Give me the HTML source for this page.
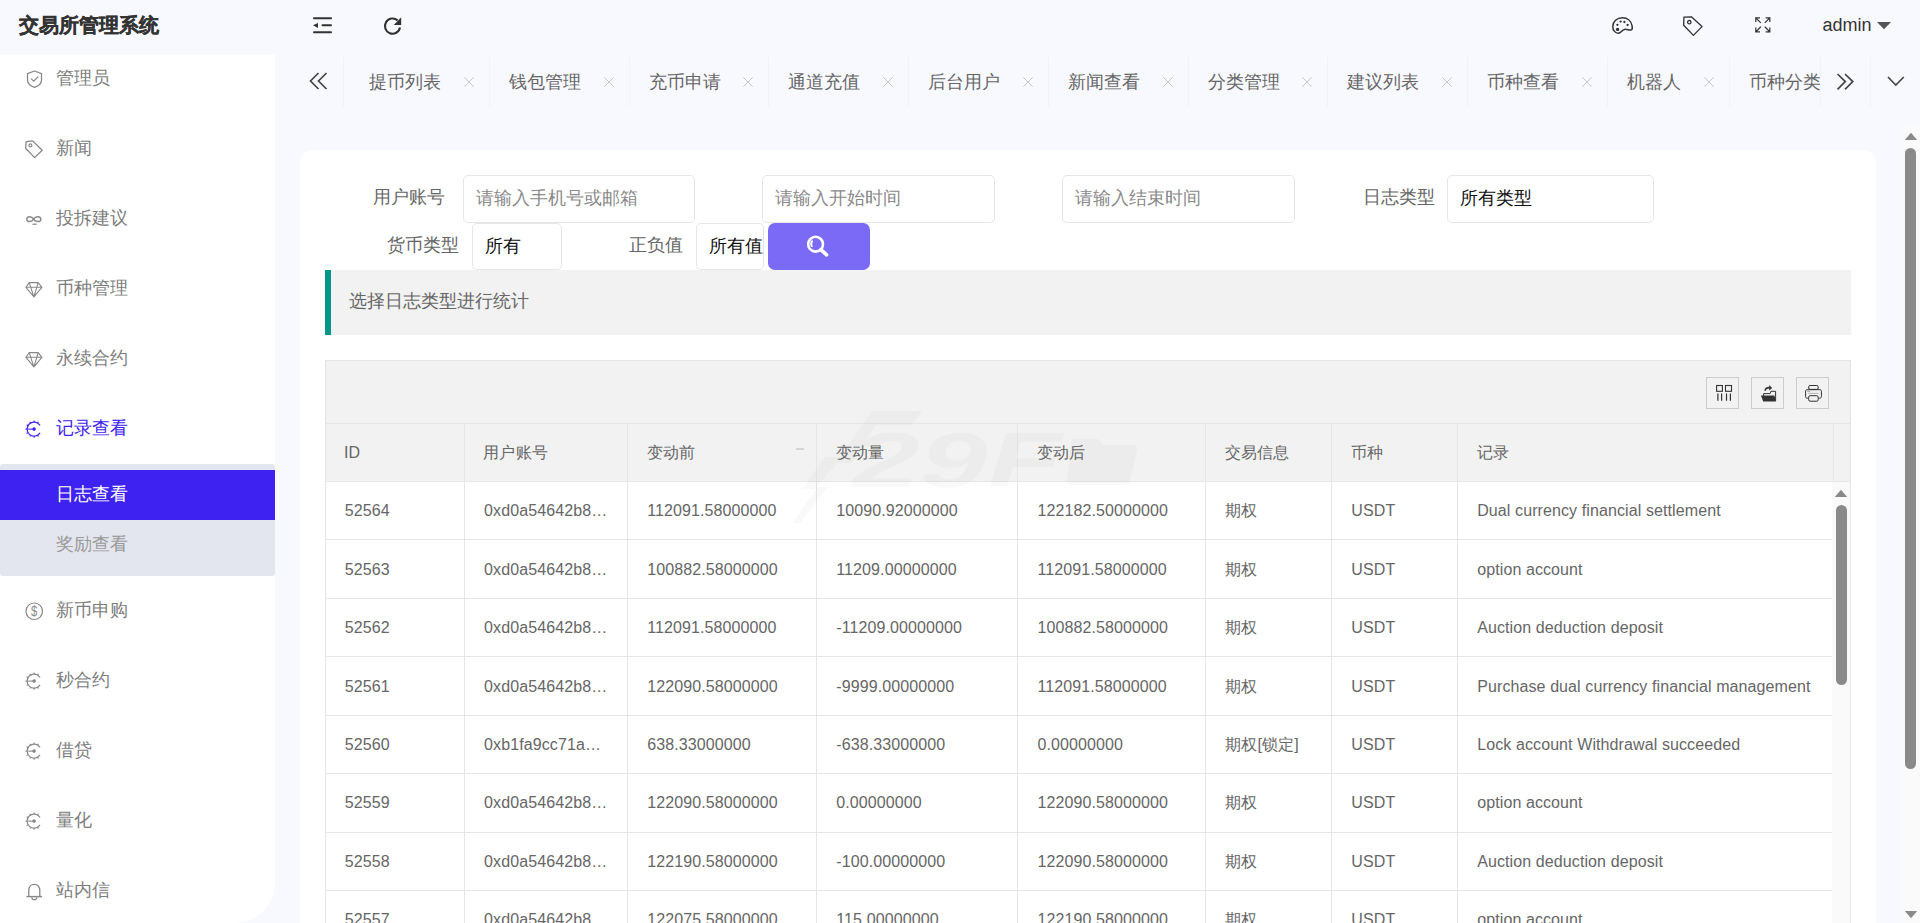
<!DOCTYPE html>
<html><head><meta charset="utf-8">
<style>
*{box-sizing:border-box;margin:0;padding:0}
html,body{width:1920px;height:923px;overflow:hidden;background:#f8f9fe;font-family:"Liberation Sans",sans-serif;color:#666}
.abs{position:absolute}
.logo{left:19px;top:9.5px;font-size:19.6px;font-weight:bold;color:#333;line-height:30px;letter-spacing:0.05px;-webkit-text-stroke:0.3px #333}
svg{position:absolute;overflow:visible}
/* sidebar */
.side{left:0;top:55px;width:275px;height:868px;background:#fff;border-bottom-right-radius:40px}
.mi{position:absolute;left:56px;font-size:18px;color:#7d7d7d;line-height:24px;white-space:nowrap}
.sub{position:absolute;left:0;top:464px;width:275px;height:112px;background:#e3e6ee;border-radius:3px}
.act{position:absolute;left:0;top:470px;width:275px;height:50px;background:#3d22f2}
/* tabs */
.tab{position:absolute;top:57px;height:50px;font-size:18px;color:#666;line-height:50px;white-space:nowrap}
.sep{position:absolute;top:57px;width:1px;height:50px;background:#f2f3f6}
.x{position:absolute;top:77px;width:10px;height:10px}

.card{position:absolute;left:300px;top:150px;width:1576px;height:800px;background:#fff;border-radius:14px}
.inp{position:absolute;top:175px;height:48px;border:1px solid #e6e6e6;border-radius:5px;background:#fff;font-size:18px;line-height:44px;padding-left:12px;padding-bottom:1px;white-space:nowrap;overflow:hidden}
.ph{color:#8a8a8a}
.val{color:#111}
.lbl{position:absolute;font-size:18px;color:#666;line-height:24px;white-space:nowrap}
.quote{position:absolute;left:325px;top:270px;width:1526px;height:65px;background:#f2f2f2;border-left:6px solid #009688}
.qt{position:absolute;left:349px;top:289px;font-size:18px;line-height:24px;color:#666}
.tbl{position:absolute;left:325px;top:360px;width:1526px;height:600px;border:1px solid #e6e6e6;background:#fff}
.tool{position:absolute;left:325px;top:360px;width:1526px;height:63px;background:#f2f2f2;border:1px solid #e6e6e6;border-bottom:none}
.tb{position:absolute;top:377px;width:33px;height:32px;border:1px solid #ccc}
.hdr{position:absolute;left:325px;top:423px;width:1526px;height:59px;background:#f2f2f2;border:1px solid #e6e6e6}
.vl{position:absolute;width:1px;background:#e6e6e6}
.hl{position:absolute;height:1px;background:#e6e6e6}
.c{position:absolute;font-size:16px;color:#666;line-height:20px;white-space:nowrap;letter-spacing:0.1px}
</style></head><body>
<div class="abs logo">交易所管理系统</div>
<!-- header icons -->
<svg style="left:313px;top:17px" width="20" height="17" viewBox="0 0 20 17">
 <rect x="0" y="0.2" width="19" height="2" rx="1" fill="#333"/>
 <rect x="8.5" y="7.2" width="10.5" height="2" rx="1" fill="#333"/>
 <rect x="0" y="14.3" width="19" height="2" rx="1" fill="#333"/>
 <path d="M0 8.2 L5 5.9 L5 10.9 Z" fill="#333"/>
</svg>
<svg style="left:383px;top:16px" width="20" height="20" viewBox="0 0 20 20">
 <path d="M17 11.5 A7.6 7.6 0 1 1 14.6 4.4" fill="none" stroke="#333" stroke-width="2.1"/>
 <path d="M10.8 9 L18.2 9 L18.2 1.3 Z" fill="#333"/>
</svg>
<!-- palette -->
<svg style="left:1612px;top:17px" width="21" height="17" viewBox="0 0 21 17">
 <path d="M10.5 0.8 C4.8 0.8 0.8 4.6 0.8 9.4 C0.8 13.6 3.4 16.2 6.4 16.2 C9 16.2 9.6 13 12.6 12.4 C15.2 11.9 16.6 13.6 19.4 12.8 C20.4 12.4 20.4 10.4 20.1 8.8 C19.2 4.2 15.6 0.8 10.5 0.8 Z" fill="none" stroke="#333" stroke-width="1.5"/>
 <circle cx="5.6" cy="12.4" r="1.7" fill="#333"/>
 <circle cx="5.4" cy="7.8" r="1.15" fill="#333"/>
 <circle cx="8.6" cy="4.6" r="1.15" fill="#333"/>
 <circle cx="12.4" cy="5.0" r="1.15" fill="#333"/>
 <circle cx="15.6" cy="8.0" r="1.15" fill="#333"/>
</svg>
<!-- tag -->
<svg style="left:1682.5px;top:15.5px" width="21" height="21" viewBox="0 0 21 21">
 <path d="M0.9 1.2 L8.4 0.8 L19 10.6 L10.4 19.4 L0.7 9.2 Z" fill="none" stroke="#333" stroke-width="1.35" stroke-linejoin="round"/>
 <circle cx="6.3" cy="6.2" r="1.7" fill="none" stroke="#333" stroke-width="1.3"/>
</svg>
<!-- fullscreen -->
<svg style="left:1754.5px;top:16.5px" width="16" height="16" viewBox="0 0 16 16"><g fill="none" stroke="#333" stroke-width="1.2" stroke-linecap="square"><path d="M0.8 4.4 V0.8 H4.4 M0.8 0.8 L5.4 5.4"/><path d="M11.2 0.8 H14.8 V4.4 M14.8 0.8 L10.2 5.4"/><path d="M0.8 11.2 V14.8 H4.4 M0.8 14.8 L5.4 10.2"/><path d="M14.8 11.2 V14.8 H11.2 M14.8 14.8 L10.2 10.2"/></g></svg>
<div class="abs" style="left:1822.5px;top:12.6px;font-size:18px;line-height:24px;color:#333">admin</div>
<svg style="left:1877px;top:22px" width="14" height="8" viewBox="0 0 14 8"><path d="M0 0 H14 L7 7.2 Z" fill="#555"/></svg>

<!-- sidebar -->
<div class="abs side"></div>
<div class="sub"></div>
<div class="act"></div>
<div class="mi" style="top:66px;color:#7d7d7d">管理员</div>
<svg style="left:26px;top:70px" width="18" height="19" viewBox="0 0 18 19"><path d="M8.5 1 L15.5 3.6 V10 C15.5 13.6 12.4 16 8.5 17.4 C4.6 16 1.5 13.6 1.5 10 V3.6 Z" fill="none" stroke="#888" stroke-width="1.3" stroke-linejoin="round"/><path d="M5 8.6 L7.7 11.2 L12.2 6.6" fill="none" stroke="#888" stroke-width="1.3"/></svg>
<div class="mi" style="top:136px;color:#7d7d7d">新闻</div>
<svg style="left:24.5px;top:139.5px" width="19" height="19" viewBox="0 0 19 19"><path d="M1.2 1.6 L7.6 0.9 L17.2 10.2 L9.6 17.6 L0.6 8.3 Z" fill="none" stroke="#888" stroke-width="1.3" stroke-linejoin="round"/><circle cx="5.4" cy="5.4" r="1.5" fill="none" stroke="#888" stroke-width="1.2"/></svg>
<div class="mi" style="top:206px;color:#7d7d7d">投拆建议</div>
<svg style="left:25px;top:210px" width="19" height="17" viewBox="0 0 19 17"><path d="M8.6 9.2 C7 6.4 1.8 5.6 1.8 9.2 C1.8 12.6 7 12 8.6 9.2 C10.3 6.4 15.8 5.6 15.8 9.2 C15.8 12.6 10.3 12 8.6 9.2 Z" fill="none" stroke="#888" stroke-width="1.5"/><rect x="7.4" y="13.6" width="4.4" height="1.2" fill="#888"/></svg>
<div class="mi" style="top:276px;color:#7d7d7d">币种管理</div>
<svg style="left:25px;top:281.5px" width="18" height="16" viewBox="0 0 18 16"><path d="M0.9 5.3 L4.2 0.6 H13.2 L16.9 5.3 L8.9 14.8 Z M0.9 5.3 H16.9 M4.2 0.6 L8.9 14.8 L13.2 0.6" fill="none" stroke="#888" stroke-width="1.1" stroke-linejoin="round"/></svg>
<div class="mi" style="top:346px;color:#7d7d7d">永续合约</div>
<svg style="left:25px;top:351.5px" width="18" height="16" viewBox="0 0 18 16"><path d="M0.9 5.3 L4.2 0.6 H13.2 L16.9 5.3 L8.9 14.8 Z M0.9 5.3 H16.9 M4.2 0.6 L8.9 14.8 L13.2 0.6" fill="none" stroke="#888" stroke-width="1.1" stroke-linejoin="round"/></svg>
<div class="mi" style="top:416px;color:#3d22f2">记录查看</div>
<svg style="left:24px;top:420.0px" width="19" height="19" viewBox="0 0 19 19"><path d="M16.04 5.39 A7.0 7.0 0 1 0 16.04 12.81" fill="none" stroke="#3d22f2" stroke-width="1.2"/><path d="M13.60 15.16 L14.40 16.55 M10.10 16.10 L10.10 17.70 M6.60 15.16 L5.80 16.55 M4.04 12.60 L2.65 13.40 M3.10 9.10 L1.50 9.10 M4.04 5.60 L2.65 4.80 M6.60 3.04 L5.80 1.65 M10.10 2.10 L10.10 0.50 M13.60 3.04 L14.40 1.65 " fill="none" stroke="#3d22f2" stroke-width="1.1"/><line x1="4.2" y1="9.1" x2="10.1" y2="9.1" stroke="#3d22f2" stroke-width="1.1"/><circle cx="10.1" cy="9.1" r="1.8" fill="#3d22f2"/></svg>
<div class="mi" style="top:598px;color:#7d7d7d">新币申购</div>
<svg style="left:25px;top:601.5px" width="19" height="19" viewBox="0 0 19 19"><rect x="1" y="1" width="16.5" height="16.5" rx="8.25" fill="none" stroke="#888" stroke-width="1.2"/><text x="11.6" y="14.4" text-anchor="middle" font-size="14.5" font-family="Liberation Sans" fill="#888" transform="scale(0.78,1)">$</text></svg>
<div class="mi" style="top:668px;color:#7d7d7d">秒合约</div>
<svg style="left:24px;top:672.0px" width="19" height="19" viewBox="0 0 19 19"><path d="M16.04 5.39 A7.0 7.0 0 1 0 16.04 12.81" fill="none" stroke="#888" stroke-width="1.2"/><path d="M13.60 15.16 L14.40 16.55 M10.10 16.10 L10.10 17.70 M6.60 15.16 L5.80 16.55 M4.04 12.60 L2.65 13.40 M3.10 9.10 L1.50 9.10 M4.04 5.60 L2.65 4.80 M6.60 3.04 L5.80 1.65 M10.10 2.10 L10.10 0.50 M13.60 3.04 L14.40 1.65 " fill="none" stroke="#888" stroke-width="1.1"/><line x1="4.2" y1="9.1" x2="10.1" y2="9.1" stroke="#888" stroke-width="1.1"/><circle cx="10.1" cy="9.1" r="1.8" fill="#888"/></svg>
<div class="mi" style="top:738px;color:#7d7d7d">借贷</div>
<svg style="left:24px;top:742.0px" width="19" height="19" viewBox="0 0 19 19"><path d="M16.04 5.39 A7.0 7.0 0 1 0 16.04 12.81" fill="none" stroke="#888" stroke-width="1.2"/><path d="M13.60 15.16 L14.40 16.55 M10.10 16.10 L10.10 17.70 M6.60 15.16 L5.80 16.55 M4.04 12.60 L2.65 13.40 M3.10 9.10 L1.50 9.10 M4.04 5.60 L2.65 4.80 M6.60 3.04 L5.80 1.65 M10.10 2.10 L10.10 0.50 M13.60 3.04 L14.40 1.65 " fill="none" stroke="#888" stroke-width="1.1"/><line x1="4.2" y1="9.1" x2="10.1" y2="9.1" stroke="#888" stroke-width="1.1"/><circle cx="10.1" cy="9.1" r="1.8" fill="#888"/></svg>
<div class="mi" style="top:808px;color:#7d7d7d">量化</div>
<svg style="left:24px;top:812.0px" width="19" height="19" viewBox="0 0 19 19"><path d="M16.04 5.39 A7.0 7.0 0 1 0 16.04 12.81" fill="none" stroke="#888" stroke-width="1.2"/><path d="M13.60 15.16 L14.40 16.55 M10.10 16.10 L10.10 17.70 M6.60 15.16 L5.80 16.55 M4.04 12.60 L2.65 13.40 M3.10 9.10 L1.50 9.10 M4.04 5.60 L2.65 4.80 M6.60 3.04 L5.80 1.65 M10.10 2.10 L10.10 0.50 M13.60 3.04 L14.40 1.65 " fill="none" stroke="#888" stroke-width="1.1"/><line x1="4.2" y1="9.1" x2="10.1" y2="9.1" stroke="#888" stroke-width="1.1"/><circle cx="10.1" cy="9.1" r="1.8" fill="#888"/></svg>
<div class="mi" style="top:878px;color:#7d7d7d">站内信</div>
<svg style="left:25.5px;top:883px" width="17" height="18" viewBox="0 0 17 18"><path d="M2.8 13.6 V7.4 C2.8 3.7 5.2 1.3 8.3 1.3 C11.4 1.3 13.8 3.7 13.8 7.4 V13.6" fill="none" stroke="#888" stroke-width="1.3"/><line x1="0.5" y1="13.6" x2="16.1" y2="13.6" stroke="#888" stroke-width="1.4"/><path d="M5.8 14.2 A2.5 2.5 0 0 0 10.8 14.2" fill="none" stroke="#888" stroke-width="1.2"/></svg>
<div class="mi" style="top:482px;color:#fff">日志查看</div>
<div class="mi" style="top:532px;color:#9a9a9a">奖励查看</div>
<div class="sep" style="left:342.8px"></div>
<div class="sep" style="left:489.0px"></div>
<div class="sep" style="left:629.0px"></div>
<div class="sep" style="left:767.8px"></div>
<div class="sep" style="left:908.0px"></div>
<div class="sep" style="left:1048.1px"></div>
<div class="sep" style="left:1188.0px"></div>
<div class="sep" style="left:1327.0px"></div>
<div class="sep" style="left:1466.9px"></div>
<div class="sep" style="left:1607.0px"></div>
<div class="sep" style="left:1729.0px"></div>
<div class="sep" style="left:1820.1px"></div>
<div class="sep" style="left:1870.2px"></div>
<div class="tab" style="left:368.8px">提币列表</div>
<svg class="x" style="left:464.0px;top:77px" width="10" height="10" viewBox="0 0 10 10"><path d="M0.3 0.3 L9.7 9.7 M9.7 0.3 L0.3 9.7" stroke="#c4c4c4" stroke-width="0.95"/></svg>
<div class="tab" style="left:508.8px">钱包管理</div>
<svg class="x" style="left:604.0px;top:77px" width="10" height="10" viewBox="0 0 10 10"><path d="M0.3 0.3 L9.7 9.7 M9.7 0.3 L0.3 9.7" stroke="#c4c4c4" stroke-width="0.95"/></svg>
<div class="tab" style="left:648.8px">充币申请</div>
<svg class="x" style="left:742.8px;top:77px" width="10" height="10" viewBox="0 0 10 10"><path d="M0.3 0.3 L9.7 9.7 M9.7 0.3 L0.3 9.7" stroke="#c4c4c4" stroke-width="0.95"/></svg>
<div class="tab" style="left:787.6px">通道充值</div>
<svg class="x" style="left:883.0px;top:77px" width="10" height="10" viewBox="0 0 10 10"><path d="M0.3 0.3 L9.7 9.7 M9.7 0.3 L0.3 9.7" stroke="#c4c4c4" stroke-width="0.95"/></svg>
<div class="tab" style="left:927.8px">后台用户</div>
<svg class="x" style="left:1023.1px;top:77px" width="10" height="10" viewBox="0 0 10 10"><path d="M0.3 0.3 L9.7 9.7 M9.7 0.3 L0.3 9.7" stroke="#c4c4c4" stroke-width="0.95"/></svg>
<div class="tab" style="left:1067.9px">新闻查看</div>
<svg class="x" style="left:1163.0px;top:77px" width="10" height="10" viewBox="0 0 10 10"><path d="M0.3 0.3 L9.7 9.7 M9.7 0.3 L0.3 9.7" stroke="#c4c4c4" stroke-width="0.95"/></svg>
<div class="tab" style="left:1207.8px">分类管理</div>
<svg class="x" style="left:1302.0px;top:77px" width="10" height="10" viewBox="0 0 10 10"><path d="M0.3 0.3 L9.7 9.7 M9.7 0.3 L0.3 9.7" stroke="#c4c4c4" stroke-width="0.95"/></svg>
<div class="tab" style="left:1346.8px">建议列表</div>
<svg class="x" style="left:1441.9px;top:77px" width="10" height="10" viewBox="0 0 10 10"><path d="M0.3 0.3 L9.7 9.7 M9.7 0.3 L0.3 9.7" stroke="#c4c4c4" stroke-width="0.95"/></svg>
<div class="tab" style="left:1486.7px">币种查看</div>
<svg class="x" style="left:1582.0px;top:77px" width="10" height="10" viewBox="0 0 10 10"><path d="M0.3 0.3 L9.7 9.7 M9.7 0.3 L0.3 9.7" stroke="#c4c4c4" stroke-width="0.95"/></svg>
<div class="tab" style="left:1626.8px">机器人</div>
<svg class="x" style="left:1704.0px;top:77px" width="10" height="10" viewBox="0 0 10 10"><path d="M0.3 0.3 L9.7 9.7 M9.7 0.3 L0.3 9.7" stroke="#c4c4c4" stroke-width="0.95"/></svg>
<div class="tab" style="left:1729.5px;width:90.6px;overflow:hidden;padding-left:19.3px">币种分类</div>
<svg style="left:309px;top:72px" width="19" height="18" viewBox="0 0 19 18"><path d="M9.5 1 L1.5 9 L9.5 17 M17.5 1 L9.5 9 L17.5 17" fill="none" stroke="#444" stroke-width="1.7"/></svg>
<svg style="left:1836px;top:72.5px" width="18" height="18" viewBox="0 0 18 18"><path d="M1.5 1 L9.3 8.6 L1.5 16.4 M9 1 L16.8 8.6 L9 16.4" fill="none" stroke="#444" stroke-width="1.7"/></svg>
<svg style="left:1886.5px;top:76px" width="18" height="11" viewBox="0 0 18 11"><path d="M1 1 L8.8 9 L16.8 1" fill="none" stroke="#444" stroke-width="1.6"/></svg>
<div class="card"></div>
<div class="lbl" style="left:372.5px;top:185.3px">用户账号</div>
<div class="inp" style="left:463px;width:232px"><span class="ph">请输入手机号或邮箱</span></div>
<div class="inp" style="left:762px;width:233px"><span class="ph">请输入开始时间</span></div>
<div class="inp" style="left:1062px;width:233px"><span class="ph">请输入结束时间</span></div>
<div class="lbl" style="left:1363px;top:185.3px">日志类型</div>
<div class="inp" style="left:1447px;width:207px"><span class="val">所有类型</span></div>
<div class="lbl" style="left:386.5px;top:232.5px">货币类型</div>
<div class="inp" style="left:472px;top:223px;width:90px;height:47px"><span class="val">所有</span></div>
<div class="lbl" style="left:628.5px;top:232.5px">正负值</div>
<div class="inp" style="left:696px;top:223px;width:68px;height:47px"><span class="val">所有值</span></div>
<div class="abs" style="left:768px;top:223px;width:102px;height:47px;background:#7a6af5;border-radius:7px"></div>
<svg style="left:804px;top:233px" width="26" height="26" viewBox="0 0 26 26"><circle cx="11.6" cy="11.2" r="7.4" fill="none" stroke="#fff" stroke-width="2.6"/><path d="M16.9 16.7 L22.6 21.9" stroke="#fff" stroke-width="3.6" stroke-linecap="round"/><path d="M8.6 7.6 A5 5 0 0 0 8.2 13.8" fill="none" stroke="#fff" stroke-width="2"/></svg>
<div class="quote"></div><div class="qt">选择日志类型进行统计</div>
<div class="tbl"></div><div class="tool"></div><div class="hdr"></div>
<div class="vl" style="left:463.9px;top:423px;height:500px"></div>
<div class="vl" style="left:627.0px;top:423px;height:500px"></div>
<div class="vl" style="left:816.1px;top:423px;height:500px"></div>
<div class="vl" style="left:1017.2px;top:423px;height:500px"></div>
<div class="vl" style="left:1205.1px;top:423px;height:500px"></div>
<div class="vl" style="left:1331.1px;top:423px;height:500px"></div>
<div class="vl" style="left:1457.0px;top:423px;height:500px"></div>
<div class="vl" style="left:1833.2px;top:423px;height:59px"></div>
<div class="c" style="left:344.0px;top:443.00px">ID</div>
<div class="c" style="left:483.4px;top:443.00px">用户账号</div>
<div class="c" style="left:646.5px;top:443.00px">变动前</div>
<div class="c" style="left:835.6px;top:443.00px">变动量</div>
<div class="c" style="left:1036.7px;top:443.00px">变动后</div>
<div class="c" style="left:1224.6px;top:443.00px">交易信息</div>
<div class="c" style="left:1350.6px;top:443.00px">币种</div>
<div class="c" style="left:1476.5px;top:443.00px">记录</div>
<div class="hl" style="left:325px;width:1507px;top:539.25px"></div>
<div class="c" style="left:344.7px;top:501.23px">52564</div>
<div class="c" style="left:484.1px;top:501.23px">0xd0a54642b8…</div>
<div class="c" style="left:647.2px;top:501.23px">112091.58000000</div>
<div class="c" style="left:836.3px;top:501.23px">10090.92000000</div>
<div class="c" style="left:1037.4px;top:501.23px">122182.50000000</div>
<div class="c" style="left:1225.3px;top:501.23px">期权</div>
<div class="c" style="left:1351.3px;top:501.23px">USDT</div>
<div class="c" style="left:1477.2px;top:501.23px">Dual currency financial settlement</div>
<div class="hl" style="left:325px;width:1507px;top:597.70px"></div>
<div class="c" style="left:344.7px;top:559.68px">52563</div>
<div class="c" style="left:484.1px;top:559.68px">0xd0a54642b8…</div>
<div class="c" style="left:647.2px;top:559.68px">100882.58000000</div>
<div class="c" style="left:836.3px;top:559.68px">11209.00000000</div>
<div class="c" style="left:1037.4px;top:559.68px">112091.58000000</div>
<div class="c" style="left:1225.3px;top:559.68px">期权</div>
<div class="c" style="left:1351.3px;top:559.68px">USDT</div>
<div class="c" style="left:1477.2px;top:559.68px">option account</div>
<div class="hl" style="left:325px;width:1507px;top:656.15px"></div>
<div class="c" style="left:344.7px;top:618.13px">52562</div>
<div class="c" style="left:484.1px;top:618.13px">0xd0a54642b8…</div>
<div class="c" style="left:647.2px;top:618.13px">112091.58000000</div>
<div class="c" style="left:836.3px;top:618.13px">-11209.00000000</div>
<div class="c" style="left:1037.4px;top:618.13px">100882.58000000</div>
<div class="c" style="left:1225.3px;top:618.13px">期权</div>
<div class="c" style="left:1351.3px;top:618.13px">USDT</div>
<div class="c" style="left:1477.2px;top:618.13px">Auction deduction deposit</div>
<div class="hl" style="left:325px;width:1507px;top:714.60px"></div>
<div class="c" style="left:344.7px;top:676.58px">52561</div>
<div class="c" style="left:484.1px;top:676.58px">0xd0a54642b8…</div>
<div class="c" style="left:647.2px;top:676.58px">122090.58000000</div>
<div class="c" style="left:836.3px;top:676.58px">-9999.00000000</div>
<div class="c" style="left:1037.4px;top:676.58px">112091.58000000</div>
<div class="c" style="left:1225.3px;top:676.58px">期权</div>
<div class="c" style="left:1351.3px;top:676.58px">USDT</div>
<div class="c" style="left:1477.2px;top:676.58px">Purchase dual currency financial management</div>
<div class="hl" style="left:325px;width:1507px;top:773.05px"></div>
<div class="c" style="left:344.7px;top:735.03px">52560</div>
<div class="c" style="left:484.1px;top:735.03px">0xb1fa9cc71a…</div>
<div class="c" style="left:647.2px;top:735.03px">638.33000000</div>
<div class="c" style="left:836.3px;top:735.03px">-638.33000000</div>
<div class="c" style="left:1037.4px;top:735.03px">0.00000000</div>
<div class="c" style="left:1225.3px;top:735.03px">期权[锁定]</div>
<div class="c" style="left:1351.3px;top:735.03px">USDT</div>
<div class="c" style="left:1477.2px;top:735.03px">Lock account Withdrawal succeeded</div>
<div class="hl" style="left:325px;width:1507px;top:831.50px"></div>
<div class="c" style="left:344.7px;top:793.47px">52559</div>
<div class="c" style="left:484.1px;top:793.47px">0xd0a54642b8…</div>
<div class="c" style="left:647.2px;top:793.47px">122090.58000000</div>
<div class="c" style="left:836.3px;top:793.47px">0.00000000</div>
<div class="c" style="left:1037.4px;top:793.47px">122090.58000000</div>
<div class="c" style="left:1225.3px;top:793.47px">期权</div>
<div class="c" style="left:1351.3px;top:793.47px">USDT</div>
<div class="c" style="left:1477.2px;top:793.47px">option account</div>
<div class="hl" style="left:325px;width:1507px;top:889.95px"></div>
<div class="c" style="left:344.7px;top:851.93px">52558</div>
<div class="c" style="left:484.1px;top:851.93px">0xd0a54642b8…</div>
<div class="c" style="left:647.2px;top:851.93px">122190.58000000</div>
<div class="c" style="left:836.3px;top:851.93px">-100.00000000</div>
<div class="c" style="left:1037.4px;top:851.93px">122090.58000000</div>
<div class="c" style="left:1225.3px;top:851.93px">期权</div>
<div class="c" style="left:1351.3px;top:851.93px">USDT</div>
<div class="c" style="left:1477.2px;top:851.93px">Auction deduction deposit</div>
<div class="hl" style="left:325px;width:1507px;top:948.40px"></div>
<div class="c" style="left:344.7px;top:910.38px">52557</div>
<div class="c" style="left:484.1px;top:910.38px">0xd0a54642b8…</div>
<div class="c" style="left:647.2px;top:910.38px">122075.58000000</div>
<div class="c" style="left:836.3px;top:910.38px">115.00000000</div>
<div class="c" style="left:1037.4px;top:910.38px">122190.58000000</div>
<div class="c" style="left:1225.3px;top:910.38px">期权</div>
<div class="c" style="left:1351.3px;top:910.38px">USDT</div>
<div class="c" style="left:1477.2px;top:910.38px">option account</div>
<svg style="left:780px;top:405px" width="380" height="125" viewBox="0 0 380 125"><g fill="#000" fill-opacity="0.022"><path d="M92 6 L60 52 L45 52 L22 84 L36 84 L12 118 L20 118 L48 82 L36 82 L58 58 L72 58 L96 20 L132 20 L142 6 Z"/><text x="72" y="82" font-family="Liberation Sans" font-weight="bold" font-style="italic" font-size="78" textLength="210" lengthAdjust="spacingAndGlyphs">29F</text><path d="M292 34 H318 L324 40 H352 Q358 40 357 46 L350 76 Q349 80 343 80 H292 Q286 80 287 74 L291 38 Q291 34 294 34 Z"/><text x="74" y="112" font-family="Liberation Sans" font-weight="bold" font-style="italic" font-size="29" textLength="280" lengthAdjust="spacingAndGlyphs">DarkSource 29DF</text></g><rect x="16" y="43" width="8" height="2" fill="#000" fill-opacity="0.12"/></svg>
<div class="tb" style="left:1706px"></div><div class="tb" style="left:1751px"></div><div class="tb" style="left:1796px"></div>
<svg style="left:1707px;top:378px" width="32" height="30" viewBox="0 0 32 30"><rect x="9.6" y="7.5" width="5.8" height="5.8" fill="none" stroke="#333" stroke-width="1.1"/><rect x="18.5" y="7.5" width="6" height="5.8" fill="none" stroke="#333" stroke-width="1.1"/><path d="M10.9 15.4 V22.7 M14.6 15.4 V22.7 M19.5 15.4 V22.7 M23.4 15.4 V22.7" stroke="#333" stroke-width="1.2"/></svg>
<svg style="left:1752px;top:378px" width="32" height="30" viewBox="0 0 32 30"><path d="M11.6 18 V15.6 H18.2 L18.9 13.3 H23.6 V23" fill="none" stroke="#333" stroke-width="1"/><path d="M8.9 17.6 H22.4 L23.9 23.5 H11.2 Z" fill="#333"/><path d="M13.2 12.8 C13.2 10.6 14.8 9.6 17.6 9.6" fill="none" stroke="#333" stroke-width="1.6"/><path d="M17.2 7 L20.2 9.9 L17.2 12.6 Z" fill="#333"/></svg>
<svg style="left:1797px;top:378px" width="32" height="30" viewBox="0 0 32 30"><rect x="11.7" y="7.5" width="9.5" height="3.9" rx="1.4" fill="none" stroke="#333" stroke-width="1"/><path d="M11.2 20.2 H10.2 C9.1 20.2 8.6 19.6 8.6 18.6 V13.2 C8.6 12.2 9.1 11.7 10.2 11.7 H22.8 C23.9 11.7 24.4 12.2 24.4 13.2 V18.6 C24.4 19.6 23.9 20.2 22.8 20.2 H21.6" fill="none" stroke="#333" stroke-width="1"/><rect x="11.7" y="17.7" width="9.5" height="5.5" rx="1.4" fill="none" stroke="#333" stroke-width="1"/><path d="M10.1 13.4 H13.3" stroke="#777" stroke-width="0.6"/><path d="M11.2 15.4 H21.6" stroke="#888" stroke-width="0.6"/></svg>
<div class="abs" style="left:1832px;top:482px;width:18px;height:441px;background:#fafafa"></div>
<svg style="left:1834px;top:489px" width="14" height="9" viewBox="0 0 14 9"><path d="M7 0.8 L13.2 8 H0.8 Z" fill="#8a8a8a"/></svg>
<div class="abs" style="left:1836px;top:505px;width:11px;height:180px;background:#8a8a8a;border-radius:6px"></div>
<div class="abs" style="left:1901px;top:125px;width:19px;height:798px;background:#fafafa"></div>
<svg style="left:1904px;top:132px" width="14" height="9" viewBox="0 0 14 9"><path d="M7 0.8 L13.2 8 H0.8 Z" fill="#8a8a8a"/></svg>
<svg style="left:1904px;top:910px" width="14" height="9" viewBox="0 0 14 9"><path d="M7 8.2 L13.2 1 H0.8 Z" fill="#8a8a8a"/></svg>
<div class="abs" style="left:1905px;top:148px;width:11px;height:621px;background:#8a8a8a;border-radius:6px"></div>
</body></html>
